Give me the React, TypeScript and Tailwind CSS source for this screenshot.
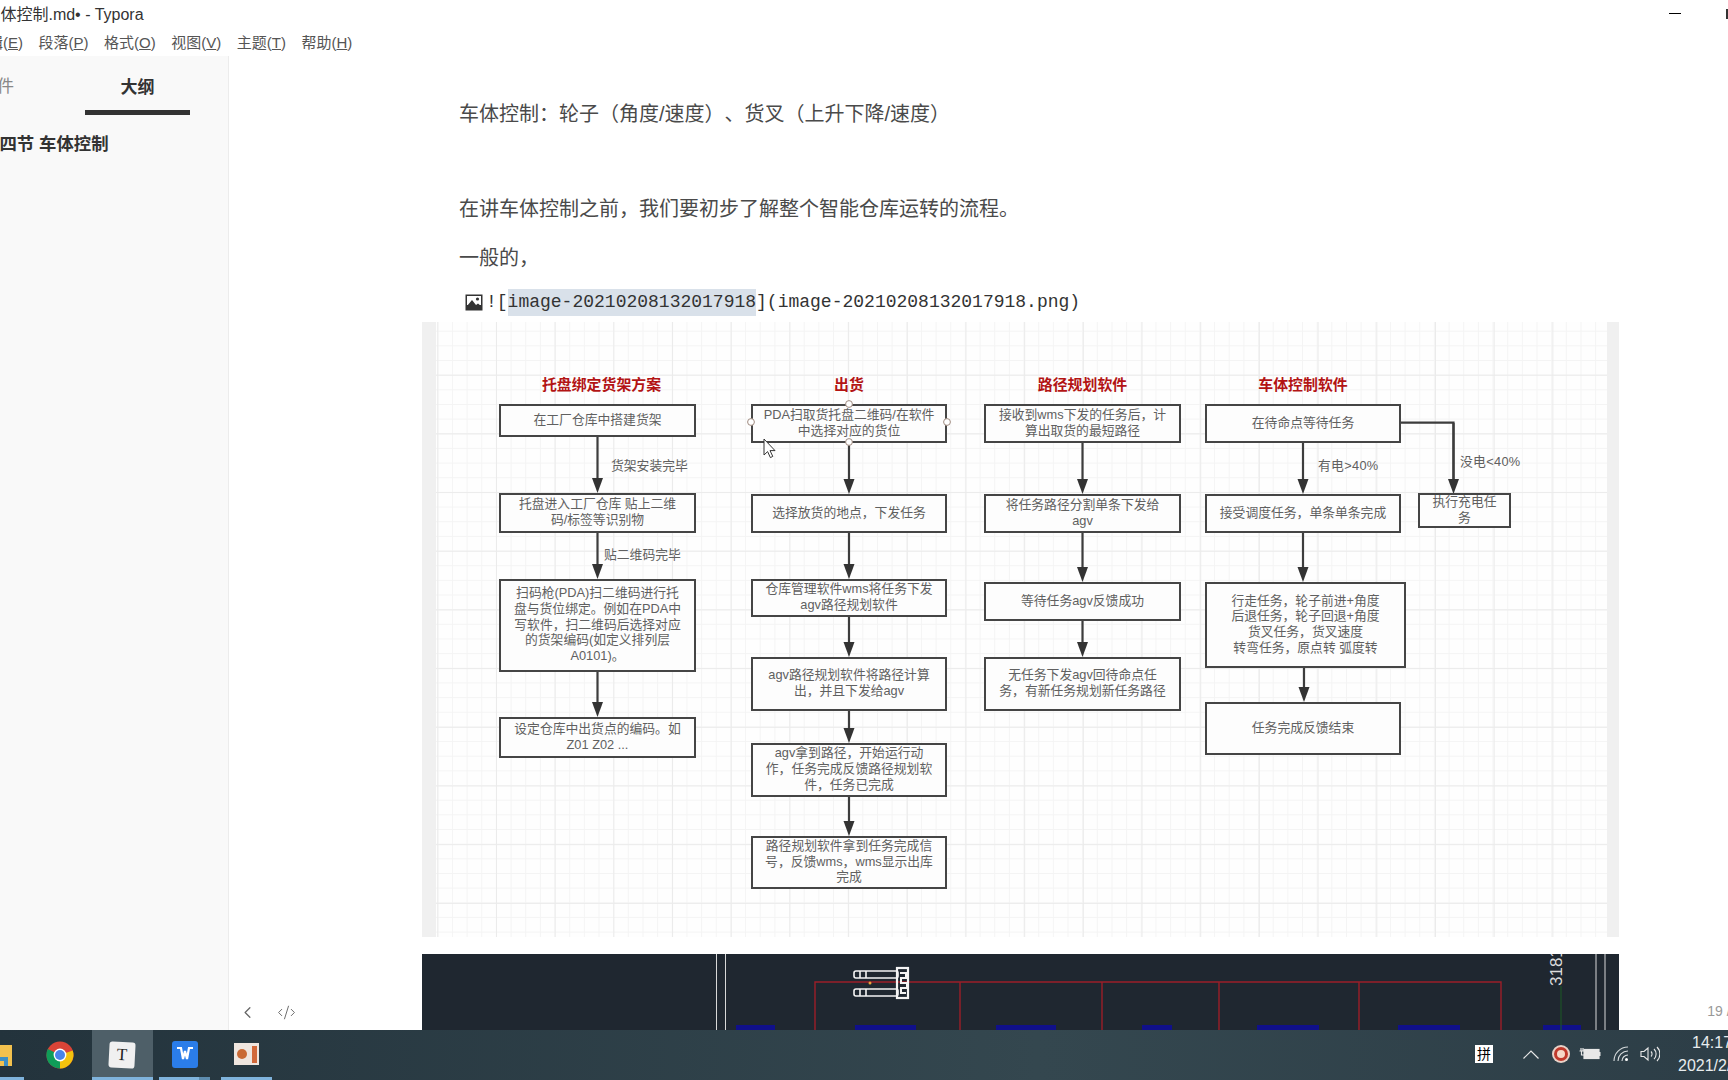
import React from 'react';
import { ChevronLeft, CodeXml } from 'lucide-react';

const CJK = "font-['Liberation_Sans','Noto_Sans_CJK_SC',sans-serif]";

interface Node {
  pos: string;
  lines: string[];
}

// page coords minus the panel origin (422, 322)
const NODES: Node[] = [
  { pos: 'left-[77px] top-[82px] w-[197px] h-[33px]', lines: ['在工厂仓库中搭建货架'] },
  { pos: 'left-[77px] top-[171px] w-[197px] h-[40px]', lines: ['托盘进入工厂仓库 贴上二维', '码/标签等识别物'] },
  {
    pos: 'left-[77px] top-[257px] w-[197px] h-[93px]',
    lines: ['扫码枪(PDA)扫二维码进行托', '盘与货位绑定。例如在PDA中', '写软件，扫二维码后选择对应', '的货架编码(如定义排列层', 'A0101)。'],
  },
  { pos: 'left-[77px] top-[395px] w-[197px] h-[41px]', lines: ['设定仓库中出货点的编码。如', 'Z01 Z02 ...'] },

  { pos: 'left-[329px] top-[82px] w-[196px] h-[39px]', lines: ['PDA扫取货托盘二维码/在软件', '中选择对应的货位'] },
  { pos: 'left-[329px] top-[172px] w-[196px] h-[39px]', lines: ['选择放货的地点，下发任务'] },
  { pos: 'left-[329px] top-[257px] w-[196px] h-[38px]', lines: ['仓库管理软件wms将任务下发', 'agv路径规划软件'] },
  { pos: 'left-[329px] top-[335px] w-[196px] h-[54px]', lines: ['agv路径规划软件将路径计算', '出，并且下发给agv'] },
  { pos: 'left-[329px] top-[421px] w-[196px] h-[54px]', lines: ['agv拿到路径，开始运行动', '作，任务完成反馈路径规划软', '件，任务已完成'] },
  { pos: 'left-[329px] top-[514px] w-[196px] h-[53px]', lines: ['路径规划软件拿到任务完成信', '号，反馈wms，wms显示出库', '完成'] },

  { pos: 'left-[562px] top-[82px] w-[197px] h-[39px]', lines: ['接收到wms下发的任务后，计', '算出取货的最短路径'] },
  { pos: 'left-[562px] top-[172px] w-[197px] h-[39px]', lines: ['将任务路径分割单条下发给', 'agv'] },
  { pos: 'left-[562px] top-[260px] w-[197px] h-[39px]', lines: ['等待任务agv反馈成功'] },
  { pos: 'left-[562px] top-[335px] w-[197px] h-[54px]', lines: ['无任务下发agv回待命点任', '务，有新任务规划新任务路径'] },

  { pos: 'left-[783px] top-[82px] w-[196px] h-[39px]', lines: ['在待命点等待任务'] },
  { pos: 'left-[783px] top-[172px] w-[196px] h-[39px]', lines: ['接受调度任务，单条单条完成'] },
  {
    pos: 'left-[783px] top-[260px] w-[201px] h-[86px]',
    lines: ['行走任务，轮子前进+角度', '后退任务，轮子回退+角度', '货叉任务，货叉速度', '转弯任务，原点转 弧度转'],
  },
  { pos: 'left-[783px] top-[380px] w-[196px] h-[53px]', lines: ['任务完成反馈结束'] },

  { pos: 'left-[996px] top-[171px] w-[93px] h-[35px]', lines: ['执行充电任', '务'] },
];

const TITLES = [
  { pos: 'left-[81px] w-[197px]', text: '托盘绑定货架方案' },
  { pos: 'left-[329px] w-[196px]', text: '出货' },
  { pos: 'left-[562px] w-[197px]', text: '路径规划软件' },
  { pos: 'left-[783px] w-[196px]', text: '车体控制软件' },
];

const LABELS = [
  { pos: 'left-[189px] top-[136px]', text: '货架安装完毕' },
  { pos: 'left-[182px] top-[225px]', text: '贴二维码完毕' },
  { pos: 'left-[896px] top-[136px] tracking-[0.3px]', text: '有电>40%' },
  { pos: 'left-[1038px] top-[132px] tracking-[0.3px]', text: '没电<40%' },
];

// x, y1, y2 in panel coords
const ARROWS: Array<[number, number, number]> = [
  [175.5, 114, 171], [175.5, 210, 257], [175.5, 349, 395],
  [427, 120, 172], [427, 210, 257], [427, 294, 335], [427, 388, 421], [427, 474, 514],
  [660.5, 120, 172], [660.5, 210, 260], [660.5, 298, 335],
  [881, 120, 172], [881, 210, 260], [882, 345, 380],
  [1031.5, 101, 172],
];

const Arrow: React.FC<{ x: number; y1: number; y2: number }> = ({ x, y1, y2 }) => (
  <g>
    <line x1={x} y1={y1} x2={x} y2={y2 - 12} stroke="#3d3d3d" strokeWidth={2.2} />
    <polygon points={`${x - 5.5},${y2 - 15} ${x + 5.5},${y2 - 15} ${x},${y2}`} fill="#333" />
  </g>
);

const FlowDiagram: React.FC = () => (
  <div className="relative h-[615px] w-[1197px] shrink-0 overflow-hidden bg-[#fefefe] bg-[linear-gradient(#ebebeb_1px,transparent_1px),linear-gradient(90deg,#ebebeb_1px,transparent_1px),linear-gradient(#f4f4f4_1px,transparent_1px),linear-gradient(90deg,#f4f4f4_1px,transparent_1px)] bg-[size:58.7px_58.7px,58.7px_58.7px,14.67px_14.67px,14.67px_14.67px] bg-[position:15.3px_52.7px,15.3px_52.7px,15.3px_8.7px,15.3px_8.7px]">
    <div className="absolute inset-y-0 left-0 w-[14px] bg-[#f0f0f0]" />
    <div className="absolute inset-y-0 right-0 w-[12px] bg-[#f0f0f0]" />

    {TITLES.map((t) => (
      <div key={t.text} className={`absolute top-[53px] h-[20px] text-center text-[14.9px] leading-[20px] font-bold whitespace-nowrap text-[#b31414] ${t.pos}`}>
        {t.text}
      </div>
    ))}

    <svg className="absolute inset-0" width={1197} height={615} fill="none">
      <path d="M979 100.7H1031.5V160" stroke="#3d3d3d" strokeWidth={2.2} />
      {ARROWS.map(([x, y1, y2]) => (
        <Arrow key={`${x}-${y1}`} x={x} y1={y1} y2={y2} />
      ))}
    </svg>

    {NODES.map((n) => (
      <div
        key={n.lines[0]}
        className={`absolute flex flex-col items-center justify-center border-2 border-[#454545] bg-[#fdfdfd] pb-[2px] text-[12.8px] leading-[15.7px] whitespace-nowrap text-[#606060] ${n.pos}`}
      >
        {n.lines.map((l) => (
          <span key={l}>{l}</span>
        ))}
      </div>
    ))}

    {LABELS.map((l) => (
      <div key={l.text} className={`absolute text-[12.8px] leading-[16px] whitespace-nowrap text-[#606060] ${l.pos}`}>
        {l.text}
      </div>
    ))}

    {/* connection handles and mouse pointer */}
    <svg className="absolute inset-0" width={1197} height={615} fill="none">
      {[[329, 100], [525, 100], [427, 82], [427, 120]].map(([cx, cy]) => (
        <circle key={`${cx}-${cy}`} cx={cx} cy={cy} r={3.4} fill="#fff" stroke="#a08b80" strokeWidth={1} />
      ))}
      <path d="M342 117V133L345.6 129.6L348.4 135.6L350.8 134.4L348 128.6H353Z" fill="#fff" stroke="#333" strokeWidth={1} />
    </svg>
  </div>
);

const CadStrip: React.FC = () => (
  <div className="h-[76px] w-[1197px] shrink-0 overflow-hidden bg-[#1f2730]">
    <svg width={1197} height={76} viewBox="422 954 1197 76" fill="none">
      {[716.5, 725.5, 1596, 1605].map((x) => (
        <line key={x} x1={x} y1={954} x2={x} y2={1030} stroke="#d8d8d8" strokeWidth={1} />
      ))}
      <path d="M815 1030V982H1501V1030" stroke="#9c1f28" strokeWidth={1.4} />
      {[960, 1102, 1219, 1359].map((x) => (
        <line key={x} x1={x} y1={982} x2={x} y2={1030} stroke="#9c1f28" strokeWidth={1.4} />
      ))}
      {[[736, 39], [855, 61], [996, 60], [1142, 30], [1257, 62], [1398, 62], [1543, 38]].map(([x, w]) => (
        <rect key={x} x={x} y={1025} width={w} height={5} fill="#10108a" />
      ))}
      <line x1={1561} y1={986} x2={1561} y2={1030} stroke="#1c5a24" strokeWidth={1} />
      <text
        x={0}
        y={0}
        transform="translate(1562 986) rotate(-90)"
        fill="#dcdcdc"
        fontSize={17}
        fontFamily="'Liberation Sans', sans-serif"
      >
        3181
      </text>
      {/* forklift */}
      <g stroke="#f4f4f4" strokeWidth={1.6}>
        <rect x={854} y={971} width={44} height={7} rx={2} />
        <rect x={854} y={989} width={44} height={7} rx={2} />
        <line x1={860} y1={971} x2={860} y2={978} />
        <line x1={866} y1={971} x2={866} y2={978} />
        <line x1={860} y1={989} x2={860} y2={996} />
        <line x1={866} y1={989} x2={866} y2={996} />
        <rect x={897} y={968} width={11} height={30} strokeWidth={2.2} />
        <path d="M900 973H906V978H901V983H907V988H901V993H906" strokeWidth={2} />
      </g>
      <circle cx={870} cy={983} r={1.5} fill="#e8a33c" />
    </svg>
  </div>
);

const MENU = [
  { label: '编辑', key: 'E' },
  { label: '段落', key: 'P' },
  { label: '格式', key: 'O' },
  { label: '视图', key: 'V' },
  { label: '主题', key: 'T' },
  { label: '帮助', key: 'H' },
];

const Editor: React.FC = () => (
  <main className="relative flex min-w-0 flex-1 flex-col overflow-hidden bg-white pl-[193px]">
    <p className="mt-[44px] ml-[37px] text-[20px] leading-[28px] whitespace-nowrap text-[#4a4a4a]">
      车体控制：轮子（角度/速度）、货叉（上升下降/速度）
    </p>
    <p className="mt-[67px] ml-[37px] text-[20px] leading-[28px] whitespace-nowrap text-[#4a4a4a]">
      在讲车体控制之前，我们要初步了解整个智能仓库运转的流程。
    </p>
    <p className="mt-[21px] ml-[37px] text-[20px] leading-[28px] whitespace-nowrap text-[#4a4a4a]">一般的，</p>
    <div className="mt-[18px] ml-[43px] flex h-[24px] items-center whitespace-nowrap font-['Liberation_Mono',monospace] text-[18px] text-[#333]">
      <svg width={18} height={17} viewBox="0 0 18 17" className="mr-[3px] shrink-0">
        <rect x={0.5} y={0.5} width={17} height={16} fill="#333" />
        <rect x={2} y={2} width={14} height={9} fill="#fff" />
        <circle cx={12.5} cy={5} r={1.6} fill="#333" />
        <path d="M2 12L7 6L11 11L13 9.5L16 12V15H2Z" fill="#333" />
      </svg>
      <span>![</span>
      <span className="bg-[#d9e1ea]">image-20210208132017918</span>
      <span>](image-20210208132017918.png)</span>
    </div>
    <div className="mt-[8px]">
      <FlowDiagram />
    </div>
    <div className="mt-[17px]">
      <CadStrip />
    </div>

    <div className="absolute bottom-[8px] left-[9px] flex items-center gap-[20px] text-[#666]">
      <ChevronLeft size={19} strokeWidth={1.6} />
      <CodeXml size={19} strokeWidth={1.2} />
    </div>
    <div className="absolute right-[-22px] bottom-[8px] text-[14px] whitespace-nowrap text-[#999]">19 / 20</div>
  </main>
);

const Chrome: React.FC = () => (
  <svg width={28} height={28} viewBox="0 0 28 28">
    <circle cx={14} cy={14} r={13.5} fill="#db4437" />
    <path d="M14 14L26.7 9.5A13.5 13.5 0 0 1 14 27.5Z" fill="#f4c20d" />
    <path d="M14 14L14 27.5A13.5 13.5 0 0 1 1.8 8Z" fill="#0f9d58" />
    <circle cx={14} cy={14} r={6.4} fill="#fff" />
    <circle cx={14} cy={14} r={5} fill="#4a84e8" />
  </svg>
);

const Taskbar: React.FC = () => (
  <footer className="relative flex h-[50px] shrink-0 items-stretch bg-[linear-gradient(90deg,#23333c,#34474f_60%,#2d3e47)]">
    <div className="relative flex w-[42px] items-center justify-start">
      <svg width={12} height={21} viewBox="0 0 12 21">
        <rect width={12} height={21} fill="#f2c14e" />
        <rect y={12} width={8} height={9} fill="#3d8fc4" />
        <rect y={16} width={4} height={5} fill="#f2c14e" />
      </svg>
      <div className="absolute bottom-0 left-0 h-[3px] w-[24px] bg-[#7fb3dc]" />
    </div>
    <div className="flex w-[50px] items-center justify-center pr-[14px]">
      <span className="shrink-0">
        <Chrome />
      </span>
    </div>
    <div className="relative flex w-[61px] items-center justify-center bg-[#4e5f68]">
      <div className="mr-[2px] flex h-[26px] w-[26px] rotate-3 items-center justify-center rounded-[3px] bg-[#f0f0f0] font-['Liberation_Serif',serif] text-[17px] text-[#222]">
        T
      </div>
      <div className="absolute bottom-0 left-0 h-[3px] w-full bg-[#7fb3dc]" />
    </div>
    <div className="relative ml-[6px] flex w-[51px] items-center justify-center">
      <div className="mb-[2px] flex h-[27px] w-[26px] items-center justify-center rounded-[3px] bg-[#2b7de9]">
        <svg width={18} height={14} viewBox="0 0 18 14" fill="none" stroke="#fff" strokeWidth={2.2}>
          <path d="M1 1H5L7 12L9 4L11 12L13 1H17" />
        </svg>
      </div>
      <div className="absolute bottom-0 left-0 h-[3px] w-[40px] bg-[#7fb3dc]" />
      <div className="absolute bottom-0 left-[40px] h-[3px] w-[11px] bg-[#5d8cae]" />
    </div>
    <div className="relative ml-[11px] flex w-[51px] items-center justify-center">
      <div className="mb-[2px] flex h-[22px] w-[25px] items-center justify-between bg-[#efe6df] pr-[2px] pl-[3px]">
        <span className="h-[10px] w-[10px] rounded-full bg-[#c96a35]" />
        <span className="h-[17px] w-[5px] bg-[#d2693a]" />
      </div>
      <div className="absolute bottom-0 left-0 h-[3px] w-full bg-[#7fb3dc]" />
    </div>

    <div className="ml-auto flex items-center pb-[2px]">
      <div className="flex h-[18px] w-[18px] items-center justify-center bg-white text-[14px] leading-none text-black">拼</div>
      <svg width={16} height={9} viewBox="0 0 16 9" fill="none" stroke="#e8e8e8" strokeWidth={1.2} className="ml-[30px]">
        <path d="M0.5 8.5L8 1L15.5 8.5" />
      </svg>
      <svg width={18} height={18} viewBox="0 0 18 18" className="ml-[13px]">
        <circle cx={9} cy={9} r={9} fill="#e9d2c8" />
        <circle cx={9} cy={9} r={7} fill="#c0392b" />
        <circle cx={9} cy={9} r={4} fill="#f6d8c8" />
      </svg>
      <svg width={22} height={14} viewBox="0 0 22 14" fill="none" stroke="#e8e8e8" strokeWidth={1.2} className="ml-[9px]">
        <rect x={5} y={2.5} width={15} height={9} fill="#e8e8e8" />
        <rect x={20} y={5} width={1.5} height={4} fill="#e8e8e8" stroke="none" />
        <path d="M0.5 4H5M2 1V4M4 1V4M2.5 4V8H5" />
      </svg>
      <svg width={18} height={16} viewBox="0 0 18 16" fill="none" stroke="#d8dcde" strokeWidth={1.1} className="ml-[12px]">
        <path d="M1 15A14 14 0 0 1 15 1M5 15A10 10 0 0 1 15 5M9 15A6 6 0 0 1 15 9" />
        <circle cx={13.5} cy={13.5} r={1.5} fill="#fff" stroke="none" />
      </svg>
      <svg width={20} height={16} viewBox="0 0 20 16" fill="none" stroke="#e8e8e8" strokeWidth={1.1} className="ml-[9px]">
        <path d="M1 5.5H4L8 2V14L4 10.5H1Z" />
        <path d="M11 5.5A3.5 3.5 0 0 1 11 10.5M14 3A7 7 0 0 1 14 13M17 1A10 10 0 0 1 17 15" />
      </svg>
      <div className="ml-[18px] flex w-[50px] flex-col items-start overflow-hidden text-[16px] leading-[23px] whitespace-nowrap text-[#e8ecee]">
        <span className="ml-[14px]">14:17</span>
        <span>2021/2/8</span>
      </div>
    </div>
  </footer>
);

const App: React.FC = () => (
  <div className={`flex h-[1080px] w-[1728px] flex-col overflow-hidden bg-white [text-spacing-trim:space-all] ${CJK}`}>
    <header className="relative flex h-[28px] shrink-0 items-center pt-[1px]">
      <span className="ml-[-68px] text-[16px] whitespace-nowrap text-[#333]">第四节 车体控制.md• - Typora</span>
      <div className="absolute top-[13px] left-[1669px] h-px w-[12px] bg-black" />
      <div className="absolute top-[9px] left-[1726px] h-[10px] w-[2px] bg-[#333]" />
    </header>
    <nav className="flex h-[28px] shrink-0 items-center gap-[15.5px] pt-[2px] text-[15px] whitespace-nowrap text-[#555]">
      {MENU.map((m, i) => (
        <span key={m.key} className={i === 0 ? 'ml-[-27px]' : ''}>
          {m.label}(<span className="underline">{m.key}</span>)
        </span>
      ))}
    </nav>
    <div className="flex min-h-0 flex-1">
      <aside className="w-[229px] shrink-0 border-r border-[#ececec] bg-[#f9f9f9]">
        <div className="relative flex h-[55px] items-center pt-[7px] text-[17px]">
          <span className="ml-[-20px] text-[#888]">文件</span>
          <span className="absolute left-[85px] flex h-full w-[105px] items-center justify-center border-b-[5px] border-[#333] pt-[7px] font-bold text-[#333]">
            大纲
          </span>
        </div>
        <div className="mt-[21px] ml-[-18px] text-[17.4px] leading-[24px] font-bold whitespace-nowrap text-[#333]">第四节 车体控制</div>
      </aside>
      <Editor />
    </div>
    <Taskbar />
  </div>
);

export default App;
